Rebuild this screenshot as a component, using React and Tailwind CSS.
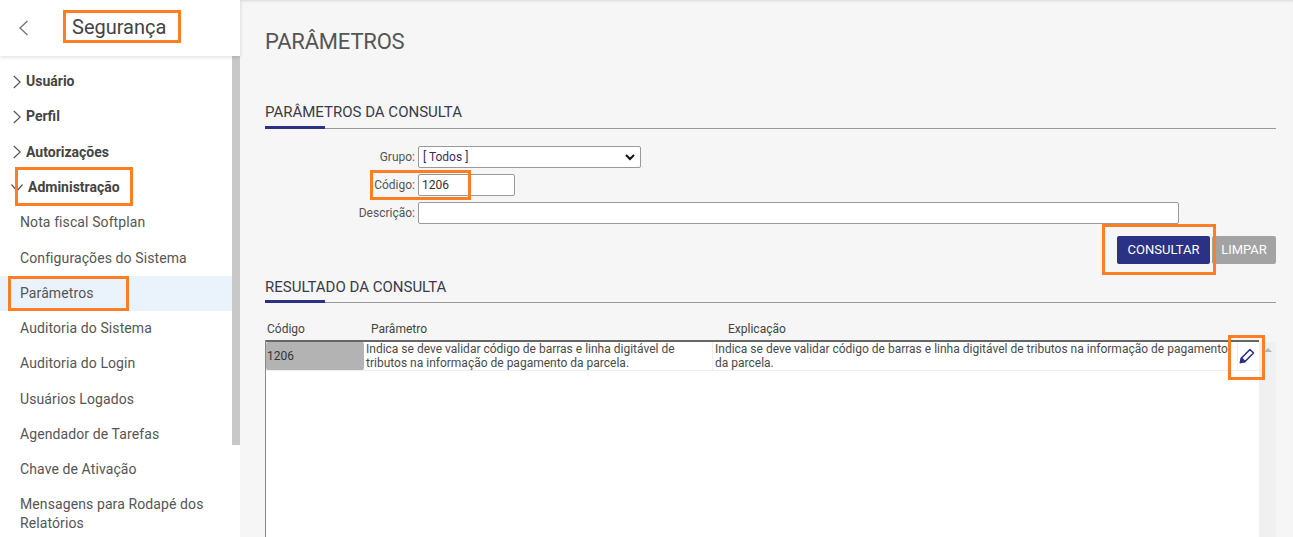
import React from 'react';

const roboto = { fontFamily: 'Roboto, "Liberation Sans", sans-serif' };

const Chevron = ({ down }) => (
  down ? (
    <svg width="12" height="8" viewBox="0 0 12 8" className="shrink-0" fill="none" stroke="#555" strokeWidth="1.2">
      <path d="M0.5 0.5 L6 7 L11.5 0.5" />
    </svg>
  ) : (
    <svg width="8" height="14" viewBox="0 0 8 14" className="shrink-0" fill="none" stroke="#555" strokeWidth="1.2">
      <path d="M0.8 1 L7.2 7 L0.8 13" />
    </svg>
  )
);

const MenuGroup = ({ label }) => (
  <div className="h-[35.3px] pl-[13px] flex items-center gap-[5px] text-[14px] font-bold text-[#444]">
    <Chevron />
    <span>{label}</span>
  </div>
);

const MenuItem = ({ label, active }) => (
  <div className={`h-[35.25px] pl-[20px] flex items-center text-[14px] tracking-[0.1px] text-[#555] ${active ? 'bg-[#eaf2fb]' : ''}`}>
    {label}
  </div>
);

// orange marker boxes drawn over the screenshot
const Mark = ({ className }) => (
  <div className={`absolute border-[3px] border-[#fd7e23] pointer-events-none ${className}`} />
);

const SectionTitle = ({ children, className }) => (
  <div className={`border-b border-[#999] h-[27px] relative text-[15px] text-[#3a3a4a] leading-[20px] ${className || ''}`}>
    {children}
    <div className="absolute left-0 -bottom-[1px] h-[3px] w-[60px] bg-[#2b3184]" />
  </div>
);

const Label = ({ children }) => (
  <span className="w-[153px] text-right pr-[3px] text-[12px] text-[#555]">{children}</span>
);

export default function App() {
  return (
    <div className="relative h-[537px] w-[1293px] overflow-hidden flex bg-[#f6f6f6]" style={roboto}>
      {/* sidebar */}
      <aside className="w-[240px] h-full shrink-0 bg-white flex flex-col">
        <header className="h-[56px] shrink-0 flex items-center shadow-[0_1px_4px_rgba(0,0,0,0.15)] relative z-10">
          <svg width="12" height="16" viewBox="0 0 12 16" fill="none" stroke="#777" strokeWidth="1.4" className="ml-[18px]">
            <path d="M9.5 1 L2 8 L9.5 15" />
          </svg>
          <span className="ml-[42px] pb-[2px] text-[20px] text-[#444]">Segurança</span>
        </header>
        <div className="flex flex-1 min-h-0">
          <nav className="w-[232px] pt-[8px] overflow-hidden">
            <MenuGroup label="Usuário" />
            <MenuGroup label="Perfil" />
            <MenuGroup label="Autorizações" />
            <div className="h-[35.3px] pl-[11px] flex items-center gap-[5px] text-[14px] font-bold text-[#444]">
              <Chevron down />
              <span>Administração</span>
            </div>
            <MenuItem label="Nota fiscal Softplan" />
            <MenuItem label="Configurações do Sistema" />
            <MenuItem label="Parâmetros" active />
            <MenuItem label="Auditoria do Sistema" />
            <MenuItem label="Auditoria do Login" />
            <MenuItem label="Usuários Logados" />
            <MenuItem label="Agendador de Tarefas" />
            <MenuItem label="Chave de Ativação" />
            <div className="pl-[20px] pr-[8px] pt-[8px] text-[14px] leading-[19px] tracking-[0.1px] text-[#555]">
              Mensagens para Rodapé dos Relatórios
            </div>
          </nav>
          <div className="w-[8px] h-[389px] bg-[#c8c8c8]" />
        </div>
      </aside>

      {/* content */}
      <main className="flex-1 min-w-0 flex flex-col pl-[25px] pr-[17px] pt-[29px] shadow-[inset_0_3px_3px_-2px_rgba(0,0,0,0.12)]">
        <h1 className="text-[22px] leading-[26px] tracking-[-0.2px] text-[#555] font-normal">PARÂMETROS</h1>

        <div className="mt-[47px]">
          <SectionTitle>PARÂMETROS DA CONSULTA</SectionTitle>
        </div>

        <div className="mt-[17px] flex items-center h-[22px]">
          <Label>Grupo:</Label>
          <div className="w-[223px] h-[22px] bg-white border border-[#999] rounded-[2px] pl-[4px] pr-[5px] flex items-center justify-between text-[12px] text-[#3b2a6b]">
            <span>[ Todos ]</span>
            <svg width="10" height="7" viewBox="0 0 10 7" fill="none" stroke="#111" strokeWidth="2"><path d="M1 1 L5 5 L9 1" /></svg>
          </div>
        </div>
        <div className="mt-[6px] flex items-center h-[22px]">
          <Label>Código:</Label>
          <div className="w-[97px] h-[22px] bg-white border border-[#999] rounded-[2px] pl-[3px] flex items-center text-[12px] text-[#333]">1206</div>
        </div>
        <div className="mt-[6px] flex items-center h-[22px]">
          <Label>Descrição:</Label>
          <div className="w-[761px] h-[22px] bg-white border border-[#999] rounded-[2px]" />
        </div>

        <div className="mt-[12px] flex justify-end gap-[2px]">
          <button className="w-[93px] h-[28px] bg-[#2b3184] rounded-[2px] text-white text-[13px]">CONSULTAR</button>
          <button className="w-[64px] h-[28px] bg-[#a3a3a3] rounded-[2px] text-white text-[13px]">LIMPAR</button>
        </div>

        <div className="mt-[12px]">
          <SectionTitle className="pt-[1px]">RESULTADO DA CONSULTA</SectionTitle>
        </div>

        {/* table */}
        <div className="flex h-[23px] mt-[14px] text-[12px] text-[#444] items-center">
          <span className="w-[106px] pl-[2px]">Código</span>
          <span className="w-[357px]">Parâmetro</span>
          <span>Explicação</span>
        </div>
        <div className="flex-1 min-h-0 flex border-l border-[#888]">
          <div className="flex-1 min-w-0 border-t-[2px] border-[#666] bg-white">
            <div className="flex h-[29px] border-b border-[#eee] text-[12px] leading-[14px] text-[#4a4a4a]">
              <div className="w-[98px] shrink-0 bg-[#b3b3b3] rounded-[2px] flex items-center pl-[1px] text-[#333]">1206</div>
              <div className="w-[349px] shrink-0 pl-[2px] border-r border-[#eee]">
                Indica se deve validar código de barras e linha digitável de tributos na informação de pagamento da parcela.
              </div>
              <div className="flex-1 min-w-0 pl-[2px] border-r border-[#eee]">
                Indica se deve validar código de barras e linha digitável de tributos na informação de pagamento da parcela.
              </div>
              <div className="w-[21px] shrink-0 flex items-center justify-center pr-[3px]">
                <svg width="16" height="16" viewBox="0 0 16 16" fill="none" stroke="#2b3184" strokeWidth="1.6" strokeLinejoin="round">
                  <path d="M11 1.5 L14.5 5 L6 13.5 L1.5 14.5 L2.5 10 Z" />
                  <path d="M2.5 10 L6 13.5 L1.5 14.5 Z" fill="#2b3184" />
                </svg>
              </div>
            </div>
          </div>
          <div className="w-[17px] shrink-0 mt-[2px] bg-[#f0f0f0] flex justify-center pt-[6px]">
            <div className="w-0 h-0 border-x-[4px] border-x-transparent border-b-[4px] border-b-[#b5b5b5]" />
          </div>
        </div>
      </main>

      <Mark className="left-[63px] top-[10px] w-[118px] h-[33px]" />
      <Mark className="left-[15px] top-[167px] w-[118px] h-[39px]" />
      <Mark className="left-[8px] top-[276px] w-[121px] h-[35px]" />
      <Mark className="left-[370px] top-[170px] w-[101px] h-[30px]" />
      <Mark className="left-[1102px] top-[224px] w-[114px] h-[51px]" />
      <Mark className="left-[1228px] top-[335px] w-[37px] h-[45px]" />
    </div>
  );
}
